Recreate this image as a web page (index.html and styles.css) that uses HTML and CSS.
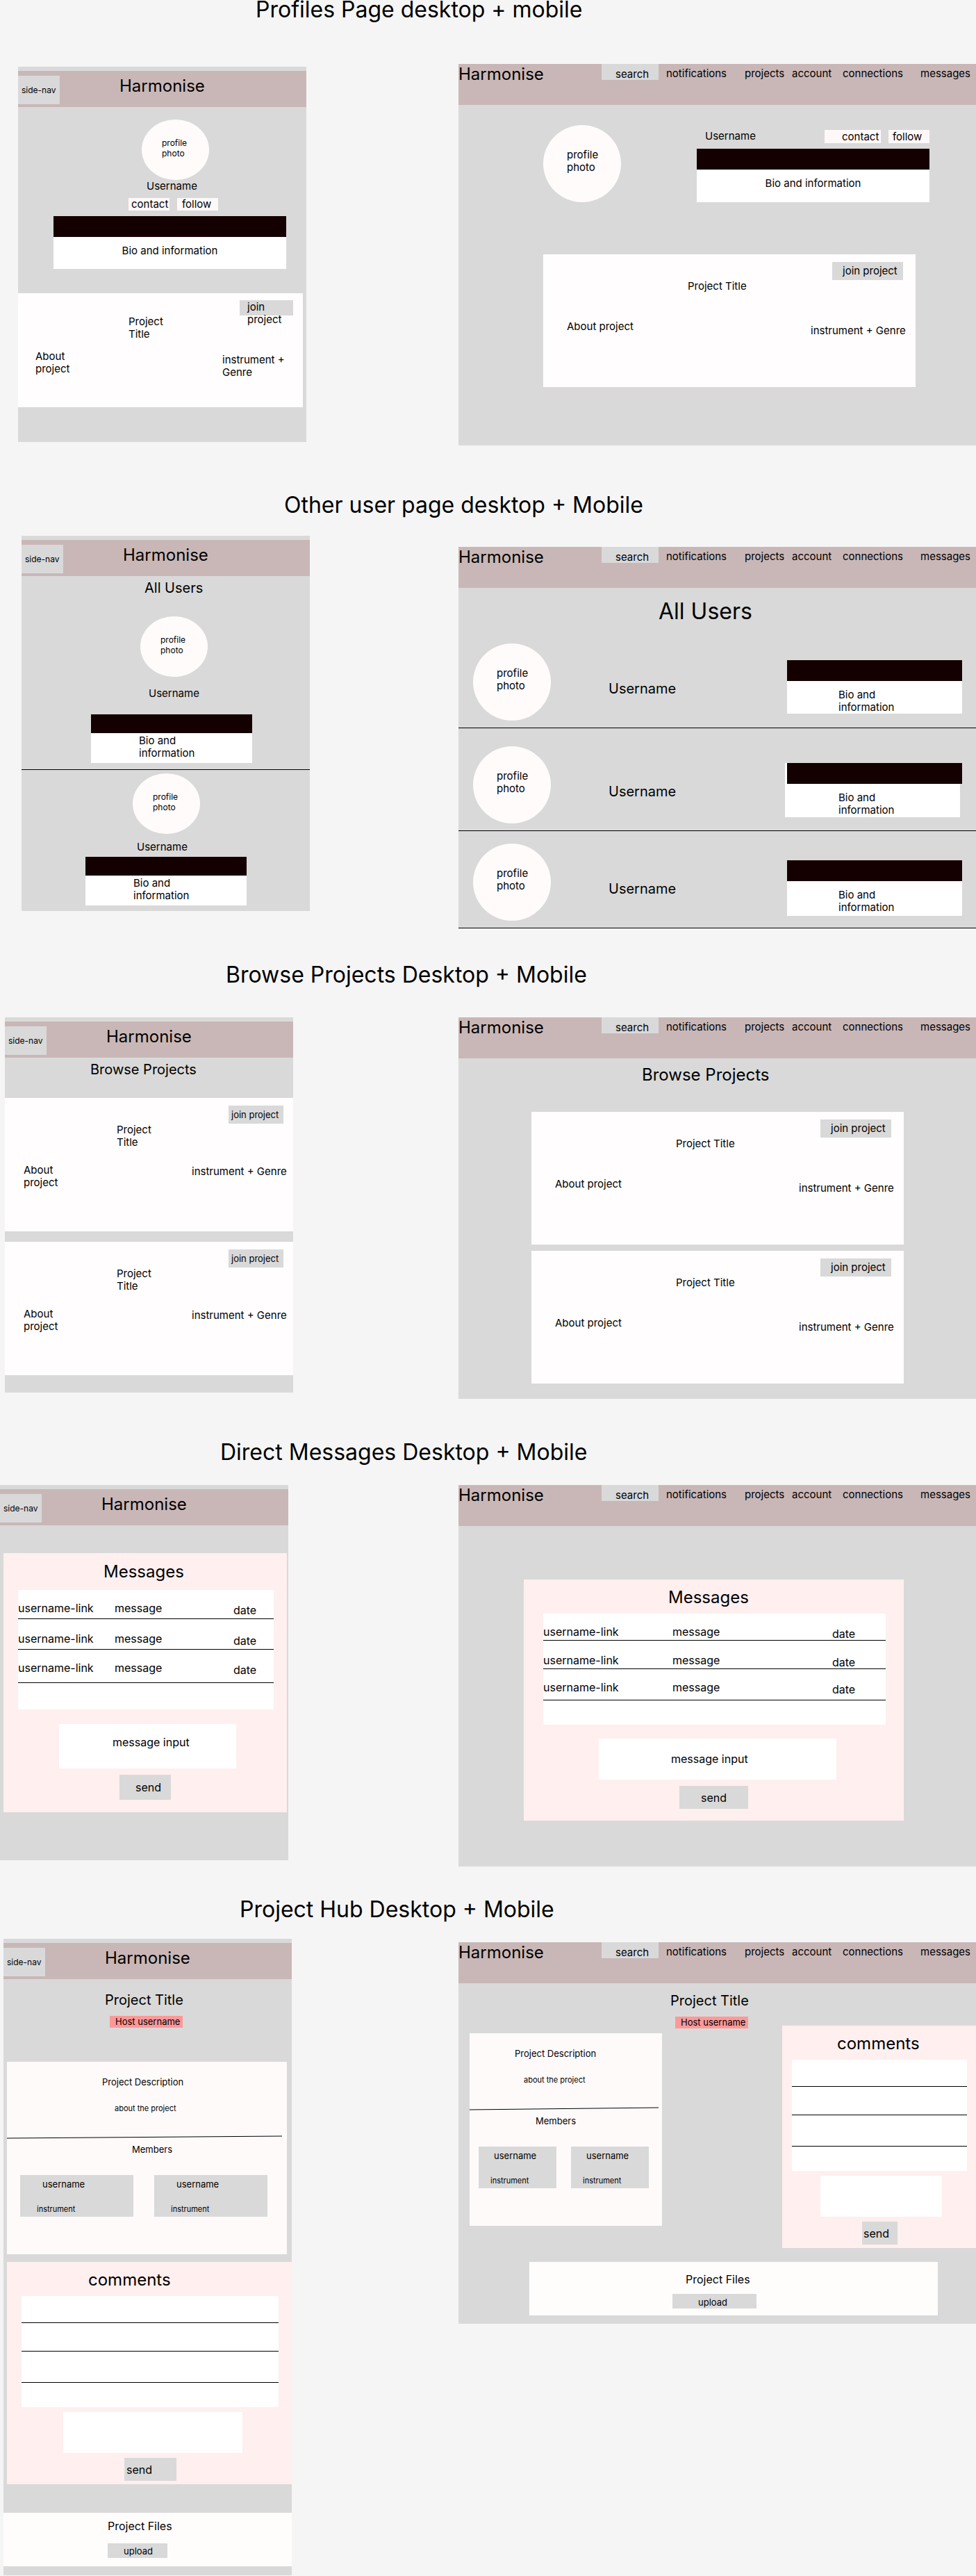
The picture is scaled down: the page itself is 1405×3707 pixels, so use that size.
FILE: index.html
```html
<!DOCTYPE html>
<html lang="en">
<head>
<meta charset="utf-8">
<meta name="viewport" content="width=device-width, initial-scale=1">
<title>Harmonise wireframes</title>
<link rel="stylesheet" href="styles.css">
</head>
<body>
<main>

<!-- Profiles -->
<section class="board board-profile">
  <h2 class="board-title">Profiles Page desktop + mobile</h2>
  <div class="phone">
    <header class="phone-header">
      <button class="side-nav" type="button">side-nav</button>
      <span class="brand">Harmonise</span>
    </header>
    <div class="profile">
      <div class="photo">profile<br>photo</div>
      <p class="profile-name">Username</p>
      <div class="profile-actions">
        <button class="chip chip-contact" type="button">contact</button>
        <button class="chip chip-follow" type="button">follow</button>
      </div>
      <div class="bio"><div class="bio-bar"></div><p class="bio-text">Bio and information</p></div>
    </div>
    <article class="project">
      <p class="project-about">About project</p>
      <h3 class="project-title">Project Title</h3>
      <div class="project-side">
        <button class="join" type="button">join project</button>
        <p class="project-genre">instrument + Genre</p>
      </div>
    </article>
  </div>
  <div class="desktop">
    <header class="desktop-header">
      <span class="brand">Harmonise</span>
      <nav class="nav" aria-label="Profile page">
        <input class="search" type="search" placeholder="search" aria-label="search">
        <a href="#">notifications</a><a href="#">projects</a><a href="#">account</a><a href="#">connections</a><a href="#">messages</a>
      </nav>
    </header>
    <div class="profile">
      <div class="photo">profile<br>photo</div>
      <div class="profile-info">
        <div class="profile-actions">
          <p class="profile-name">Username</p>
          <button class="chip chip-contact" type="button">contact</button>
          <button class="chip chip-follow" type="button">follow</button>
        </div>
        <div class="bio"><div class="bio-bar"></div><p class="bio-text">Bio and information</p></div>
      </div>
    </div>
    <article class="project">
      <p class="project-about">About project</p>
      <h3 class="project-title">Project Title</h3>
      <div class="project-side">
        <button class="join" type="button">join project</button>
        <p class="project-genre">instrument + Genre</p>
      </div>
    </article>
  </div>
</section>

<!-- Other users -->
<section class="board board-users">
  <h2 class="board-title">Other user page desktop + Mobile</h2>
  <div class="phone">
    <header class="phone-header">
      <button class="side-nav" type="button">side-nav</button>
      <span class="brand">Harmonise</span>
    </header>
    <h3 class="page-heading">All Users</h3>
    <div class="user user-first">
      <div class="photo">profile<br>photo</div>
      <p class="user-name">Username</p>
      <div class="bio"><div class="bio-bar"></div><p class="bio-text">Bio and<br>information</p></div>
    </div>
    <div class="user user-last">
      <div class="photo">profile<br>photo</div>
      <p class="user-name">Username</p>
      <div class="bio"><div class="bio-bar"></div><p class="bio-text">Bio and<br>information</p></div>
    </div>
  </div>
  <div class="desktop">
    <header class="desktop-header">
      <span class="brand">Harmonise</span>
      <nav class="nav" aria-label="Users page">
        <input class="search" type="search" placeholder="search" aria-label="search">
        <a href="#">notifications</a><a href="#">projects</a><a href="#">account</a><a href="#">connections</a><a href="#">messages</a>
      </nav>
    </header>
    <h3 class="page-heading">All Users</h3>
    <div class="user user-first">
      <div class="photo">profile<br>photo</div>
      <p class="user-name">Username</p>
      <div class="bio"><div class="bio-bar"></div><p class="bio-text">Bio and<br>information</p></div>
    </div>
    <div class="user user-middle">
      <div class="photo">profile<br>photo</div>
      <p class="user-name">Username</p>
      <div class="bio"><div class="bio-bar"></div><p class="bio-text">Bio and<br>information</p></div>
    </div>
    <div class="user user-last">
      <div class="photo">profile<br>photo</div>
      <p class="user-name">Username</p>
      <div class="bio"><div class="bio-bar"></div><p class="bio-text">Bio and<br>information</p></div>
    </div>
  </div>
</section>

<!-- Browse projects -->
<section class="board board-browse">
  <h2 class="board-title">Browse Projects Desktop + Mobile</h2>
  <div class="phone">
    <header class="phone-header">
      <button class="side-nav" type="button">side-nav</button>
      <span class="brand">Harmonise</span>
    </header>
    <h3 class="page-heading">Browse Projects</h3>
    <div class="project-list">
      <article class="project">
        <p class="project-about">About project</p>
        <h3 class="project-title">Project Title</h3>
        <div class="project-side">
          <button class="join" type="button">join project</button>
          <p class="project-genre">instrument + Genre</p>
        </div>
      </article>
      <article class="project">
        <p class="project-about">About project</p>
        <h3 class="project-title">Project Title</h3>
        <div class="project-side">
          <button class="join" type="button">join project</button>
          <p class="project-genre">instrument + Genre</p>
        </div>
      </article>
    </div>
  </div>
  <div class="desktop">
    <header class="desktop-header">
      <span class="brand">Harmonise</span>
      <nav class="nav" aria-label="Browse page">
        <input class="search" type="search" placeholder="search" aria-label="search">
        <a href="#">notifications</a><a href="#">projects</a><a href="#">account</a><a href="#">connections</a><a href="#">messages</a>
      </nav>
    </header>
    <h3 class="page-heading">Browse Projects</h3>
    <div class="project-list">
      <article class="project">
        <p class="project-about">About project</p>
        <h3 class="project-title">Project Title</h3>
        <div class="project-side">
          <button class="join" type="button">join project</button>
          <p class="project-genre">instrument + Genre</p>
        </div>
      </article>
      <article class="project">
        <p class="project-about">About project</p>
        <h3 class="project-title">Project Title</h3>
        <div class="project-side">
          <button class="join" type="button">join project</button>
          <p class="project-genre">instrument + Genre</p>
        </div>
      </article>
    </div>
  </div>
</section>

<!-- Direct messages -->
<section class="board board-messages">
  <h2 class="board-title">Direct Messages Desktop + Mobile</h2>
  <div class="phone">
    <header class="phone-header">
      <button class="side-nav" type="button">side-nav</button>
      <span class="brand">Harmonise</span>
    </header>
    <form class="panel">
      <h3 class="panel-title">Messages</h3>
      <table class="messages">
        <tr><td><a href="#">username-link</a></td><td>message</td><td>date</td></tr>
        <tr><td><a href="#">username-link</a></td><td>message</td><td>date</td></tr>
        <tr><td><a href="#">username-link</a></td><td>message</td><td>date</td></tr>
        <tr><td colspan="3"></td></tr>
      </table>
      <textarea class="entry" placeholder="message input" aria-label="message input"></textarea>
      <button class="send" type="button">send</button>
    </form>
  </div>
  <div class="desktop">
    <header class="desktop-header">
      <span class="brand">Harmonise</span>
      <nav class="nav" aria-label="Messages page">
        <input class="search" type="search" placeholder="search" aria-label="search">
        <a href="#">notifications</a><a href="#">projects</a><a href="#">account</a><a href="#">connections</a><a href="#">messages</a>
      </nav>
    </header>
    <form class="panel">
      <h3 class="panel-title">Messages</h3>
      <table class="messages">
        <tr><td><a href="#">username-link</a></td><td>message</td><td>date</td></tr>
        <tr><td><a href="#">username-link</a></td><td>message</td><td>date</td></tr>
        <tr><td><a href="#">username-link</a></td><td>message</td><td>date</td></tr>
        <tr><td colspan="3"></td></tr>
      </table>
      <textarea class="entry" placeholder="message input" aria-label="message input"></textarea>
      <button class="send" type="button">send</button>
    </form>
  </div>
</section>

<!-- Project hub -->
<section class="board board-hub">
  <h2 class="board-title">Project Hub Desktop + Mobile</h2>
  <div class="phone">
    <header class="phone-header">
      <button class="side-nav" type="button">side-nav</button>
      <span class="brand">Harmonise</span>
    </header>
    <div class="hub">
      <div class="hub-head">
        <h3 class="hub-title">Project Title</h3>
        <a class="host" href="#">Host username</a>
      </div>
      <article class="details">
        <h4 class="details-title">Project Description</h4>
        <p class="details-about">about the project</p>
        <svg class="details-rule" viewBox="0 0 396 5" preserveAspectRatio="none" aria-hidden="true"><path d="M0 4 396 1" stroke="#000" fill="none" vector-effect="non-scaling-stroke"/></svg>
        <h4 class="members-title">Members</h4>
        <div class="members">
          <div class="member"><p class="member-name">username</p><p class="member-role">instrument</p></div>
          <div class="member"><p class="member-name">username</p><p class="member-role">instrument</p></div>
        </div>
      </article>
      <form class="panel">
        <h3 class="panel-title">comments</h3>
        <div class="comments"><div></div><div></div><div></div><div></div></div>
        <textarea class="entry" aria-label="comment"></textarea>
        <button class="send" type="button">send</button>
      </form>
    </div>
    <div class="files">
      <h4 class="files-title">Project Files</h4>
      <button class="upload" type="button">upload</button>
    </div>
  </div>
  <div class="desktop">
    <header class="desktop-header">
      <span class="brand">Harmonise</span>
      <nav class="nav" aria-label="Project hub page">
        <input class="search" type="search" placeholder="search" aria-label="search">
        <a href="#">notifications</a><a href="#">projects</a><a href="#">account</a><a href="#">connections</a><a href="#">messages</a>
      </nav>
    </header>
    <div class="hub">
      <article class="details">
        <h4 class="details-title">Project Description</h4>
        <p class="details-about">about the project</p>
        <svg class="details-rule" viewBox="0 0 396 5" preserveAspectRatio="none" aria-hidden="true"><path d="M0 4 396 1" stroke="#000" fill="none" vector-effect="non-scaling-stroke"/></svg>
        <h4 class="members-title">Members</h4>
        <div class="members">
          <div class="member"><p class="member-name">username</p><p class="member-role">instrument</p></div>
          <div class="member"><p class="member-name">username</p><p class="member-role">instrument</p></div>
        </div>
      </article>
      <div class="hub-head">
        <h3 class="hub-title">Project Title</h3>
        <a class="host" href="#">Host username</a>
      </div>
      <form class="panel">
        <h3 class="panel-title">comments</h3>
        <div class="comments"><div></div><div></div><div></div><div></div></div>
        <textarea class="entry" aria-label="comment"></textarea>
        <button class="send" type="button">send</button>
      </form>
    </div>
    <div class="files">
      <h4 class="files-title">Project Files</h4>
      <button class="upload" type="button">upload</button>
    </div>
  </div>
</section>

</main>
</body>
</html>
```
FILE: styles.css
```css
* { box-sizing: border-box; }

body {
  margin: 0;
  background: #f5f5f5;
  color: #000;
  font: 15px/18px Inter, "Liberation Sans", sans-serif;
}

h2, h3, h4, p { margin: 0; font-weight: 400; }
a { color: inherit; text-decoration: none; }

button, input, textarea {
  display: block;
  margin: 0;
  padding: 0;
  border: 0;
  border-radius: 0;
  background: #d9d9d9;
  color: inherit;
  font: inherit;
  text-align: left;
  resize: none;
}

::placeholder { color: #000; opacity: 1; }

/* Boards: a title above a phone and a desktop frame */
.board {
  display: grid;
  grid-template-columns: 660px minmax(0, 1fr);
  align-items: start;
}
.board-title { grid-column: 1 / -1; font-size: 32px; line-height: 28px; }

.board-profile { padding-bottom: 72px; }
.board-profile .board-title { padding-left: 368px; }
.board-profile .phone { margin: 68px 0 0 26px; padding-bottom: 50px; }
.board-profile .desktop { margin-top: 64px; padding-bottom: 84px; }

.board-users { padding-bottom: 53px; }
.board-users .board-title { padding-left: 409px; }
.board-users .phone { margin: 30px 0 0 31px; padding-bottom: 8px; }
.board-users .desktop { margin-top: 46px; }

.board-browse { padding-bottom: 63px; }
.board-browse .board-title { padding-left: 325px; }
.board-browse .phone { margin: 47px 0 0 7px; padding-bottom: 25px; }
.board-browse .desktop { margin-top: 47px; padding-bottom: 22px; }

.board-messages { padding-bottom: 48px; }
.board-messages .board-title { padding-left: 317px; }
.board-messages .phone { margin-top: 33px; padding-bottom: 69px; }
.board-messages .desktop { margin-top: 33px; padding-bottom: 66px; }

.board-hub .board-title { padding-left: 345px; }
.board-hub .phone { margin: 28px 0 0 5px; padding-bottom: 13px; }
.board-hub .desktop { margin-top: 33px; padding-bottom: 12px; }

/* Frames */
.phone { max-width: 415px; padding-top: 6px; background: #d9d9d9; }
.desktop { background: #d9d9d9; }
.brand { font-size: 24px; line-height: 29px; }

.phone-header { display: flex; gap: 86px; height: 52px; padding-top: 7px; background: #c9b7b7; }
.side-nav { width: 60px; height: 41px; padding: 0 5px; font-size: 12px; line-height: 15px; }

.desktop-header { display: flex; justify-content: space-between; height: 59px; background: #c9b7b7; }
.nav { display: grid; grid-template-columns: 93px 113px 68px 73px 112px 80px; }
.nav a { padding-top: 5px; }
.search { width: 82px; height: 23px; padding: 5px 0 0 20px; outline-offset: -2px; }

/* Photos and bios */
.photo { border-radius: 50%; background: #fffbfb; }
.phone .photo { width: 97px; height: 87px; padding: 26px 0 0 29px; font-size: 12px; line-height: 15px; }
.desktop .photo { width: 112px; height: 111px; padding: 34px 0 0 34px; }

.bio { background: #fff; }
.bio-bar { height: 30px; background: #140000; }
.bio-text { min-height: 47px; padding-top: 11px; }

/* Profile */
.chip { height: 18px; background: #fff8f8; }
.profile-actions { display: flex; }
.profile .bio { width: 335px; }
.profile .bio-text { text-align: center; }

.phone .profile { padding: 18px 0 35px 51px; }
.phone .profile .photo { margin-left: 127px; }
.phone .profile-name { padding-left: 134px; }
.phone .profile-actions { gap: 11px; padding: 8px 0 8px 108px; }
.phone .chip { width: 59px; padding-left: 4px; }
.phone .chip-follow { padding-left: 7px; }
.phone .profile .bio-text { min-height: 46px; }

.desktop .profile { display: flex; gap: 109px; padding: 29px 0 75px 122px; }
.desktop .profile-info { width: 335px; padding-top: 7px; }
.desktop .profile-name { flex: 1; padding-left: 12px; }
.desktop .profile-actions { gap: 11px; padding-bottom: 8px; }
.desktop .chip { height: 19px; }
.desktop .chip-contact { width: 81px; padding-left: 25px; }
.desktop .chip-follow { width: 59px; padding-left: 6px; }

/* Users */
.phone .page-heading { font-size: 20px; line-height: 24px; padding-top: 5px; }
.board-users .phone .page-heading { padding-left: 177px; }
.board-users .phone .bio { width: 232px; }
.board-users .phone .bio-bar { height: 27px; }
.board-users .phone .bio-text { min-height: 43px; padding: 2px 0 0 69px; }
.phone .user-first { padding: 29px 0 9px 100px; border-bottom: 1px solid #000; }
.phone .user-first .photo { margin-left: 71px; }
.phone .user-first .user-name { padding: 15px 0 21px 83px; }
.phone .user-last { padding: 5px 0 0 92px; }
.phone .user-last .photo { margin-left: 68px; }
.phone .user-last .user-name { padding: 10px 0 5px 74px; }

.board-users .desktop .page-heading { padding: 15px 0 27px 288px; font-size: 32px; line-height: 38px; }
.desktop .user {
  display: grid;
  grid-template-columns: 195px 257px 252px;
  align-items: start;
  padding: 0 0 10px 21px;
  border-bottom: 1px solid #000;
}
.desktop .user-name { padding-top: 53px; font-size: 20px; line-height: 24px; }
.desktop .user .bio { margin-top: 24px; }
.desktop .user .bio-text { padding-left: 74px; }
.desktop .user-middle { padding-top: 26px; }
.desktop .user-middle .bio { margin: 24px 3px 0 -3px; }
.desktop .user-middle .bio-bar { margin: 0 -3px 0 3px; }
.desktop .user-middle .bio-text { min-height: 48px; padding-left: 77px; }
.desktop .user-last { padding-top: 18px; }
.desktop .user-last .bio-text { min-height: 50px; }

/* Project cards */
.project { display: grid; align-items: start; background: #fffdfd; }
.project-list { display: grid; }

.phone .project { grid-template-columns: 134px 108px 1fr; min-height: 192px; padding-left: 27px; }
.phone .project-about { max-width: 64px; padding-top: 95px; }
.phone .project-title { max-width: 64px; padding-top: 37px; font-size: 15px; }
.phone .join { width: 79px; height: 26px; margin: 11px 0 60px 53px; padding-left: 4px; font-size: 13px; line-height: 16px; }
.phone .project-list { gap: 15px; padding-top: 29px; }
.board-browse .phone .page-heading { padding-left: 123px; }

.board-profile .phone .project { grid-template-columns: 134px 135px 1fr; min-height: 164px; margin-right: 5px; padding-left: 25px; }
.board-profile .phone .project-about { padding-top: 82px; }
.board-profile .phone .project-title { padding-top: 32px; }
.board-profile .phone .join {
  display: flex;
  align-items: flex-start;
  width: 77px;
  height: 22px;
  margin: 10px 0 55px 25px;
  padding: 1px 0 0 11px;
  font-size: 15px;
  line-height: 18px;
}

.desktop .project { grid-template-columns: 174px 177px 1fr; width: 536px; min-height: 191px; margin-left: 122px; padding-left: 34px; }
.desktop .project-about { padding-top: 95px; }
.desktop .project-title { padding-top: 37px; font-size: 15px; }
.desktop .join { width: 102px; height: 26px; margin: 11px 0 64px 31px; padding-left: 15px; }
.desktop .project-list { gap: 9px; padding-top: 39px; }
.desktop .project-list .project { margin-left: 105px; }
.board-browse .desktop .page-heading { padding: 9px 0 0 264px; font-size: 24px; line-height: 29px; }

/* Pink panels: messages and comments */
.panel { background: #ffefef; font-size: 16px; }
.panel-title { font-size: 24px; line-height: 29px; }
.entry { background: #fff; }

.messages { border-spacing: 0; table-layout: fixed; background: #fff; }
.messages td { padding: 17px 0 0; border-bottom: 1px solid #000; vertical-align: top; }
.messages td:last-child { padding-top: 20px; }
.messages tr:nth-child(2) td { padding-top: 19px; }
.messages tr:nth-child(2) td:last-child { padding-top: 22px; }
.messages tr:last-child td { padding: 0; border: 0; }

.phone .messages { width: 368px; margin: 12px 0 21px 21px; }
.phone .messages td:nth-child(1) { width: 139px; }
.phone .messages td:nth-child(2) { width: 171px; }
.phone .messages tr:nth-child(1) td { height: 42px; }
.phone .messages tr:nth-child(2) td { height: 44px; }
.phone .messages tr:nth-child(3) td { height: 48px; }
.phone .messages tr:nth-child(4) td { height: 38px; }
.board-messages .phone .panel { margin: 40px 2px 0 5px; padding: 12px 0 18px; }
.board-messages .phone .panel-title { padding-left: 144px; }
.board-messages .phone .entry { width: 255px; height: 64px; margin: 0 0 9px 80px; padding: 17px 0 0 77px; }
.board-messages .phone .send { width: 74px; height: 36px; margin-left: 167px; padding-left: 23px; }

.desktop .messages { width: 493px; margin: 9px 0 20px 28px; }
.desktop .messages td:nth-child(1) { width: 186px; }
.desktop .messages td:nth-child(2) { width: 230px; }
.desktop .messages tr:nth-child(1) td { height: 39px; }
.desktop .messages tr:nth-child(2) td { height: 41px; }
.desktop .messages tr:nth-child(3) td { height: 45px; }
.desktop .messages tr:nth-child(4) td { height: 35px; }
.board-messages .desktop .panel { width: 547px; margin: 77px 0 0 94px; padding: 11px 0 17px; }
.board-messages .desktop .panel-title { padding-left: 208px; }
.board-messages .desktop .entry { width: 342px; height: 59px; margin: 0 0 9px 108px; padding: 20px 0 0 104px; }
.board-messages .desktop .send { width: 99px; height: 33px; margin-left: 224px; padding-left: 31px; }

/* Project hub */
.hub-title { font-size: 20px; line-height: 24px; }
.host { display: block; width: 105px; margin: 11px 0 0 7px; padding-left: 8px; background: #fd9898; font-size: 13px; line-height: 17px; }

.details { min-height: 277px; padding-top: 21px; background: #fefafa; font-size: 13px; line-height: 16px; }
.details-title, .members-title { font-size: 13px; }
.details-about { padding-top: 23px; font-size: 11px; line-height: 14px; }
.details-rule { display: block; height: 5px; margin: 32px 0 7px; }
.members { display: flex; padding-top: 29px; }
.member { height: 60px; padding-top: 5px; background: #d9d9d9; }
.member-role { padding-top: 21px; font-size: 11px; line-height: 14px; }

.comments { background: #fff; }
.comments div { height: 39px; border-bottom: 1px solid #000; }
.comments div:nth-child(2) { height: 41px; }
.comments div:nth-child(3) { height: 45px; }
.comments div:nth-child(4) { height: 35px; border: 0; }
.hub .panel { padding: 11px 0 5px; }
.hub .entry { height: 59px; margin-top: 7px; margin-bottom: 7px; }
.hub .send { height: 33px; }

.files { background: #fffdfc; }
.files-title { font-size: 16px; line-height: 19px; }
.upload { height: 21px; font-size: 13px; line-height: 16px; }

.phone .hub-head { padding: 18px 0 49px 146px; }
.phone .details { margin: 0 7px 11px 5px; }
.phone .details-title { padding-left: 137px; }
.phone .details-about { padding-left: 155px; }
.phone .details-rule { width: 396px; }
.phone .members-title { padding-left: 180px; }
.phone .members { gap: 30px; padding-left: 19px; }
.phone .member { width: 163px; padding-left: 24px; }
.phone .member-name { padding-left: 8px; }
.phone .hub .panel { margin-left: 5px; }
.phone .hub .panel-title { padding-left: 117px; }
.phone .comments { width: 370px; margin: 9px 0 0 21px; }
.phone .hub .entry { width: 258px; margin-left: 81px; }
.phone .hub .send { width: 75px; margin-left: 169px; padding-left: 3px; }
.phone .files { margin-top: 41px; padding: 10px 0 12px 150px; }
.phone .upload { width: 86px; margin-top: 15px; padding-left: 23px; }

.desktop .hub { display: grid; grid-template-columns: 277px 1fr 279px; align-items: start; padding-left: 16px; }
.desktop .hub-head { padding: 13px 0 0 12px; }
.desktop .details { margin-top: 72px; }
.desktop .details-title { padding-left: 65px; }
.desktop .details-about { padding-left: 78px; }
.desktop .details-rule { width: 272px; }
.desktop .members-title { padding-left: 95px; }
.desktop .members { gap: 21px; padding-left: 13px; }
.desktop .member { width: 112px; padding-left: 17px; }
.desktop .member-name { padding-left: 5px; }
.desktop .hub .panel { margin-top: 61px; }
.desktop .hub .panel-title { padding-left: 79px; }
.desktop .comments { margin: 9px 13px 0 14px; }
.desktop .hub .entry { width: 175px; margin-left: 55px; }
.desktop .hub .send { width: 51px; margin-left: 115px; padding-left: 2px; }
.desktop .files { width: 588px; margin: 20px 0 0 102px; padding: 16px 0 10px 206px; }
.desktop .files-title { padding-left: 19px; }
.desktop .upload { width: 121px; margin-top: 11px; padding: 2px 0 0 37px; }
```
